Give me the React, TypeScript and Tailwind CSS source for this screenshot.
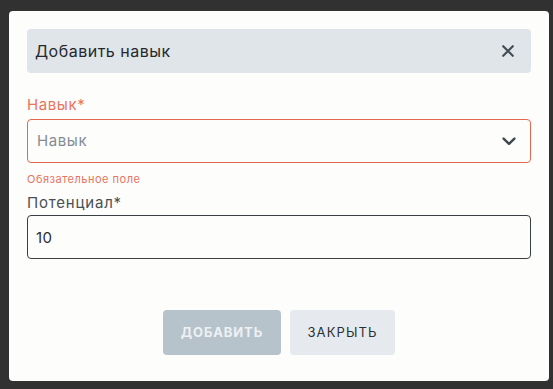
import { useState } from 'react';

export default function App() {
  const [potential, setPotential] = useState('10');

  return (
    <div className="w-[553px] h-[389px] bg-[#313131] pt-[11px] pl-[9px] font-['Inter',sans-serif]">
      <div className="w-[540px] h-[370px] bg-[#fdfdfc] rounded-[4px] px-[18px] pt-[18px] flex flex-col">
        {/* Header */}
        <div className="h-[44px] bg-[#dfe5e9] rounded-[4px] flex items-center justify-between pl-[8px] pr-[17px]">
          <span className="text-[16px] text-[#26292c] tracking-[0.5px]">Добавить навык</span>
          <button className="text-[#454d54]">
            <svg width="12" height="12" viewBox="0 0 12 12" fill="none">
              <path d="M1.2 1.2l9.6 9.6M10.8 1.2l-9.6 9.6" stroke="currentColor" strokeWidth="2.2" strokeLinecap="round" />
            </svg>
          </button>
        </div>

        {/* Skill select */}
        <label className="mt-[22px] h-[20px] leading-[20px] text-[15px] text-[#e8745e] tracking-[0.6px]">Навык*</label>
        <div className="mt-[4px] h-[44px] border border-[#e3684f] rounded-[4px] flex items-center justify-between pl-[9px] pr-[14px]">
          <span className="text-[15px] text-[#868c92] tracking-[0.6px]">Навык</span>
          <svg width="14" height="9" viewBox="0 0 14 9" fill="none" className="text-[#3f474e]">
            <path d="M1.6 1.6l5.4 5.2 5.4-5.2" stroke="currentColor" strokeWidth="2.4" strokeLinecap="round" strokeLinejoin="round" />
          </svg>
        </div>
        <div className="mt-[9px] h-[14px] leading-[14px] text-[11px] text-[#e8745e] tracking-[0.5px]">Обязательное поле</div>

        {/* Potential */}
        <label className="mt-[7px] h-[20px] leading-[20px] text-[15px] text-[#4a4f54] tracking-[0.8px]">Потенциал*</label>
        <input
          value={potential}
          onChange={(e) => setPotential(e.target.value)}
          className="mt-[2px] h-[44px] border border-[#3a3f44] rounded-[4px] pl-[8px] text-[15px] text-[#2a2e32] bg-transparent outline-none tracking-[0.3px]"
        />

        {/* Actions */}
        <div className="mt-[51px] flex justify-center gap-[9px]">
          <button disabled className="h-[45px] w-[118px] rounded-[4px] bg-[#b6c3cb] text-[13px] font-bold text-[#eef1f3] tracking-[0.9px]">
            ДОБАВИТЬ
          </button>
          <button className="h-[45px] w-[105px] rounded-[4px] bg-[#e6eaee] text-[13px] text-[#2b3034] tracking-[1.1px]">
            ЗАКРЫТЬ
          </button>
        </div>
      </div>
    </div>
  );
}
